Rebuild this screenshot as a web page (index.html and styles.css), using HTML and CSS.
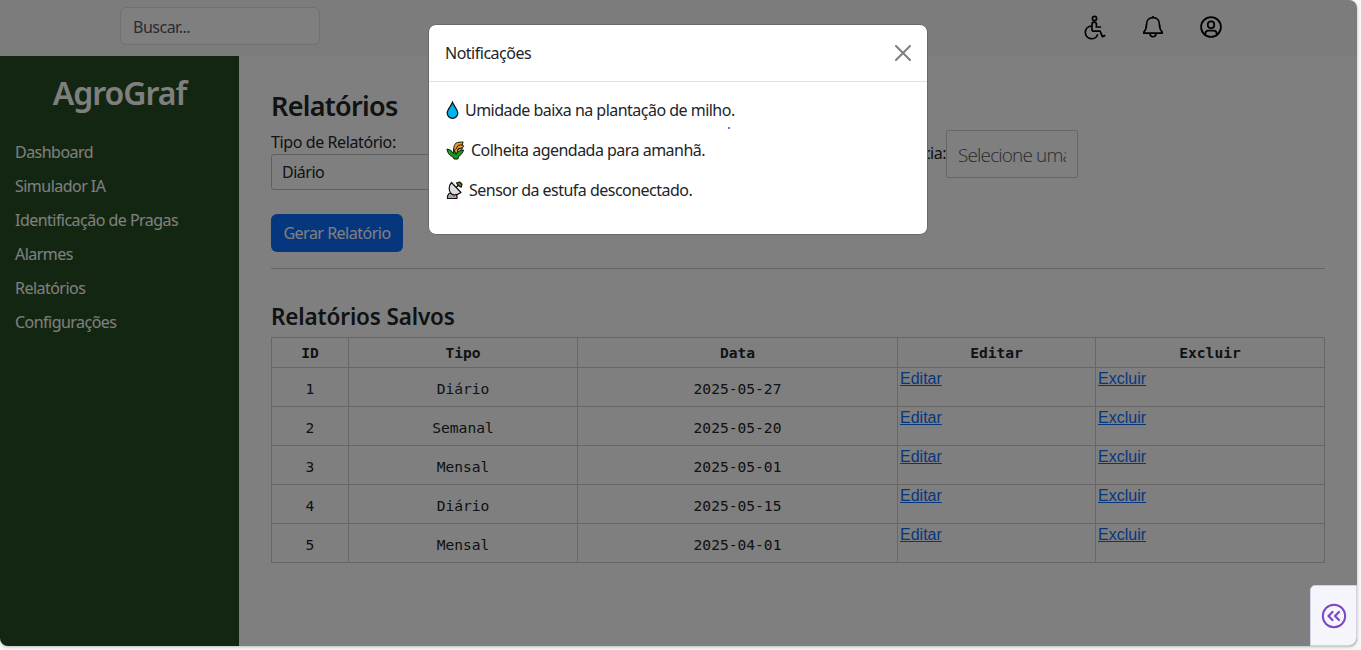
FILE: index.html
```
<!DOCTYPE html>
<html lang="pt-BR">
<head>
<meta charset="utf-8">
<title>AgroGraf</title>
<link rel="stylesheet" href="styles.css">
</head>
<body>
<div class="window">
  <header class="topbar">
    <div class="search">Buscar...</div>
    <nav class="actions">
      <svg width="24" height="26" viewBox="0 0 24 26" fill="none" stroke="#000" stroke-width="1.7" stroke-linejoin="round"><circle cx="11.5" cy="4.5" r="2.1"/><path d="M9 17V10.400a2.200 2.200 0 0 1 4.400 0V13h4.700M9 17.200h8.200l2.200 5.400 2.900-1.200M8 12.200a6.300 6.300 0 1 0 6.700 8"/></svg>
      <svg width="22" height="24" viewBox="0 0 22 24" fill="none" stroke="#000" stroke-width="1.7" stroke-linejoin="round"><path d="M11 1v2M11 2.700c-4 0-6.500 3-6.500 6.700 0 3.600-.5 5.400-2.700 7.600v1.200h18.400V17c-2.200-2.200-2.700-4-2.700-7.600 0-3.700-2.500-6.700-6.500-6.700zM8 18.500c0 4.300 6 4.300 6 0"/></svg>
      <svg width="24" height="24" viewBox="0 0 24 24" fill="none" stroke="#000" stroke-width="1.8"><circle cx="12" cy="12" r="9.900"/><rect x="8.800" y="6.300" width="6.400" height="6.800" rx="2.900"/><path d="M6.200 19.800c0-2.600 1.200-4.200 3.200-4.200h5.200c2 0 3.200 1.600 3.200 4.200"/></svg>
    </nav>
  </header>
  <div class="body">
    <aside class="sidebar">
      <h1 class="brand">AgroGraf</h1>
      <a>Dashboard</a><a>Simulador IA</a><a>Identificação de Pragas</a><a>Alarmes</a><a>Relatórios</a><a>Configurações</a>
    </aside>
    <main class="main">
      <h2 class="title">Relatórios</h2>
      <div class="form">
        <div class="field"><span class="label">Tipo de Relatório:</span><div class="select">Diário</div></div>
        <div class="date"><span class="label">Data de Referência:</span><div class="date-input"><span>Selecione uma</span></div></div>
      </div>
      <div class="button">Gerar Relatório</div>
      <div class="rule"></div>
      <h3 class="subtitle">Relatórios Salvos</h3>
      <table class="table">
        <colgroup><col class="c1"><col class="c2"><col class="c3"><col class="c4"><col class="c5"></colgroup>
        <tr><th>ID</th><th>Tipo</th><th>Data</th><th>Editar</th><th>Excluir</th></tr>
        <tr><td>1</td><td>Diário</td><td>2025-05-27</td><td class="act"><a>Editar</a></td><td class="act"><a>Excluir</a></td></tr>
        <tr><td>2</td><td>Semanal</td><td>2025-05-20</td><td class="act"><a>Editar</a></td><td class="act"><a>Excluir</a></td></tr>
        <tr><td>3</td><td>Mensal</td><td>2025-05-01</td><td class="act"><a>Editar</a></td><td class="act"><a>Excluir</a></td></tr>
        <tr><td>4</td><td>Diário</td><td>2025-05-15</td><td class="act"><a>Editar</a></td><td class="act"><a>Excluir</a></td></tr>
        <tr><td>5</td><td>Mensal</td><td>2025-04-01</td><td class="act"><a>Editar</a></td><td class="act"><a>Excluir</a></td></tr>
      </table>
    </main>
  </div>
  <div class="backdrop"></div>
  <section class="modal">
    <div class="modal-head"><span class="modal-title">Notificações</span>
      <svg width="16" height="16" viewBox="0 0 16 16" stroke="#7f7f7f" stroke-width="2" stroke-linecap="round"><path d="M1 1l14 14M15 1L1 15"/></svg>
    </div>
    <div class="modal-body">
      <div class="note"><svg width="13" height="18" viewBox="0 0 13 18"><path d="M6.500 1.200C5.300 5 1.200 8.200 1.200 12a5.200 5.200 0 0 0 10.600 0C11.800 8.200 7.700 5 6.500 1.200z" fill="#00b2f0" stroke="#111" stroke-width="1.200"/></svg><span>Umidade baixa na plantação de milho.</span></div>
      <div class="note"><svg width="19" height="19" viewBox="0 0 20 20" stroke="#111" stroke-linejoin="round"><path d="M9 14C7 10 8 2.500 12 1.500L18 1l-1 3 1.500 1-2 4-3-1.500L11 14z" fill="#e8a02a"/><path d="M10 9l3-4.500L18 4M11.500 9.500L17 7" fill="none"/><path d="M1 8.500c3.500.5 5.500 2 7 5l.5-4.500 2 5c1.500-2.500 4-4.500 8-4.500-1 3.500-3 5.500-5 6.500l-1 3h-4l-1.500-2.500C4 15.500 2 13.500 1 8.500z" fill="#159a1c"/></svg><span>Colheita agendada para amanhã.</span></div>
      <div class="note"><svg width="17" height="19" viewBox="0 0 17 19" stroke="#111" stroke-width="1.200" stroke-linejoin="round"><path d="M3 12.500L1.500 15v2.500h9.500V15l-1.500-4z" fill="#aaa"/><path d="M5.500 1.500C2.500 5 2.500 10 5 12.500S12 13.500 15 11.500z" fill="#dedede"/><path d="M10 6.500l2.500-2.500" fill="none"/><path d="M10.500 2l3-1L16 3.300l-.8 2.900-2.700-1.500z" fill="#667d19"/><path d="M8 13.800V16" stroke="#c84b3e"/></svg><span>Sensor da estufa desconectado.</span></div>
    </div>
    <i class="dot"></i>
  </section>
  <div class="dock"><svg width="26" height="26" viewBox="0 0 26 26" fill="none" stroke="#7f45c5" stroke-width="2"><circle cx="13" cy="13" r="11.200"/><path d="M11.500 9L7.500 13l4 4M18 9L14 13l4 4" stroke-width="2.200" stroke-linecap="round" stroke-linejoin="round"/></svg></div>
</div>
</body>
</html>
```
FILE: styles.css
```
* { box-sizing: border-box; }
body { margin: 0; height: 650px; overflow: hidden; background: #f7f7f7; font: 16px/24px "Noto Sans", "Open Sans", sans-serif; letter-spacing: -0.5px; color: #212529; }
.window { position: relative; width: 1357px; height: 646px; border-radius: 0 8px 8px 8px; overflow: hidden; background: #fff; display: flex; flex-direction: column; box-shadow: 0 1px 3px rgba(0,0,0,.25); }
.topbar { height: 56px; background: #f8f9fa; display: flex; justify-content: space-between; padding: 7px 134px 0 120px; }
.search { width: 200px; height: 38px; border: 1px solid #dee2e6; border-radius: 6px; background: #fff; padding: 7px 12px; line-height: 24px; color: #54595e; }
.actions { display: flex; gap: 35px; align-items: center; height: 40px; }
.body { flex: 1; display: flex; }
.sidebar { flex: none; width: 239px; background: #244c22; color: #fff; padding: 18px 15px 0; display: flex; flex-direction: column; gap: 10px; letter-spacing: -.53px; }
.brand { margin: 0 0 18px; text-align: center; font-size: 32px; line-height: 38px; font-weight: 600; letter-spacing: -1px; }
.main { flex: none; width: 1118px; padding: 33px 32px 0; }
.title { margin: 0; font-size: 27px; line-height: 34px; font-weight: 600; letter-spacing: -.7px; }
.form { width: 807px; height: 85px; display: flex; justify-content: space-between; padding-top: 7px; }
.label { line-height: 24px; }
.field { width: 300px; }
.field .label { letter-spacing: -.4px; }
.select { height: 36px; border: 1px solid #bfbfbf; border-radius: 3px; padding: 5px 10px; }
.date { display: flex; }
.date .label { margin-top: 11px; }
.date-input { width: 132px; height: 48px; border: 1px solid #ccc; border-radius: 2px; padding: 12px 11px; font: 300 19px/24px "Open Sans", sans-serif; letter-spacing: -.85px; color: #555; }
.date-input span { display: block; overflow: hidden; white-space: nowrap; }
.button { width: 132px; height: 38px; margin-top: 6px; background: #0d6efd; color: #fff; border-radius: 6px; line-height: 38px; text-align: center; }
.rule { width: 1054px; height: 1px; background: #c8c9ca; margin: 16px 0 32px; }
.subtitle { margin: 0 0 5px; font-size: 22.500px; line-height: 31px; font-weight: 600; letter-spacing: -.15px; }
.table { width: 1053px; border-collapse: collapse; table-layout: fixed; font: 14.600px/24px "DejaVu Sans Mono", monospace; letter-spacing: 0; text-align: center; }
.c1 { width: 77px; } .c2 { width: 229px; } .c3 { width: 320px; } .c4 { width: 198px; } .c5 { width: 229px; }
.table th, .table td { border: 1px solid #ccc; padding: 0; }
.table th { height: 30px; }
.table td { height: 39px; padding-top: 4px; }
.table .act { vertical-align: top; text-align: left; padding: 1px 0 0 2px; font: 16px/20px "Liberation Sans", Arial, sans-serif; }
.act a { color: #0d6efd; text-decoration: underline; }
.backdrop { position: absolute; inset: 0; background: rgba(0,0,0,.5); }
.modal { position: absolute; left: 428px; top: 24px; width: 500px; height: 211px; border: 1px solid #696969; border-radius: 8px; background: #fff; }
.modal-head { height: 57px; border-bottom: 1px solid #dee2e6; display: flex; align-items: center; justify-content: space-between; padding: 0 16px; }
.modal-body { padding: 16px 17px; display: flex; flex-direction: column; gap: 16px; }
.note { height: 24px; display: flex; align-items: center; gap: 6px; white-space: nowrap; letter-spacing: -.52px; }
.dot { position: absolute; left: 299px; top: 102px; width: 2px; height: 2px; background: #4040ff; border-radius: 1px; }
.dock { position: absolute; right: 0; bottom: 0; width: 47px; height: 61px; background: #f5f6fc; border: 1px solid #d5d0e4; border-radius: 5px 0 8px 0; display: flex; align-items: center; justify-content: center; }
```
